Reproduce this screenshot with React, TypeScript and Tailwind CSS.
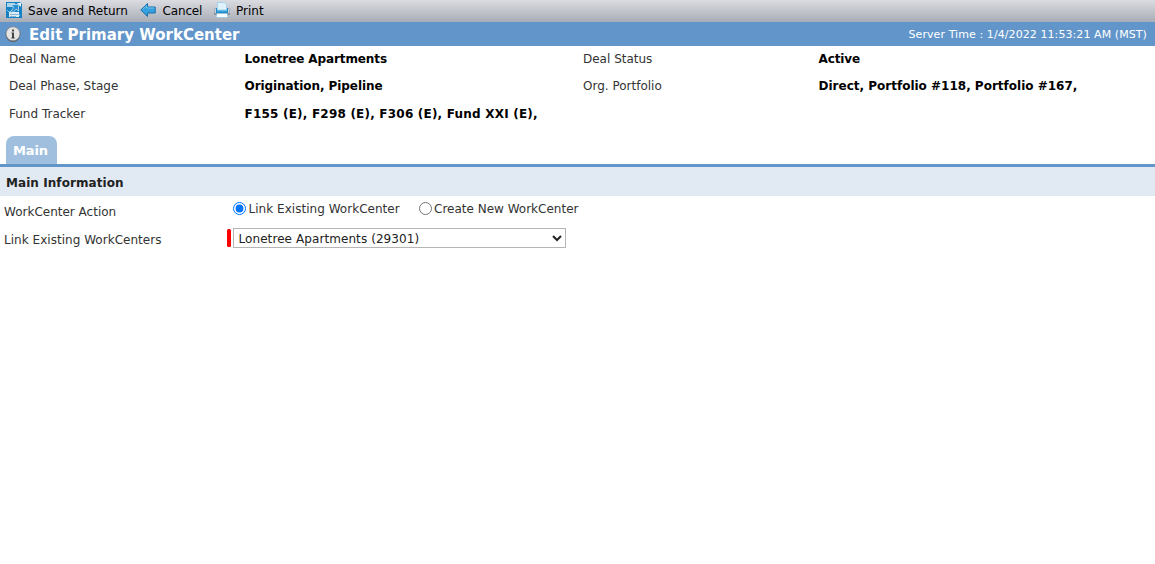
import { useState } from 'react'

type Field = { label: string; value: string; valueClass: string; rowClass: string }

const leftFields: Field[] = [
  { label: 'Deal Name', value: 'Lonetree Apartments', valueClass: 'tracking-[-0.1px]', rowClass: 'h-[27px]' },
  { label: 'Deal Phase, Stage', value: 'Origination, Pipeline', valueClass: 'tracking-[-0.07px]', rowClass: 'h-[28px]' },
  { label: 'Fund Tracker', value: 'F155 (E), F298 (E), F306 (E), Fund XXI (E),', valueClass: 'tracking-[0.21px]', rowClass: 'h-[28px]' },
]

const rightFields: Field[] = [
  { label: 'Deal Status', value: 'Active', valueClass: 'tracking-[-0.1px]', rowClass: 'h-[27px]' },
  { label: 'Org. Portfolio', value: 'Direct, Portfolio #118, Portfolio #167,', valueClass: 'tracking-normal', rowClass: 'h-[28px]' },
]

function SaveIcon() {
  return (
    <svg width="16" height="16" viewBox="0 0 16 16">
      <path d="M0 0h14l2 2v14H0z" fill="#1681c2" />
      <path d="M1 1h8v4H1z" fill="#a9d4ea" />
      <path d="M11 1h4v4z" fill="#edf6fa" />
      <path d="M3 10h10v5H3z" fill="#dcebf4" />
      <path d="M4 12.5h8M4 14.5h6" stroke="#86b4d2" />
      <path d="M5 2.5h7.5V9L10 7c-1 2.5-3.5 4-6.5 3C5.500 9 6.500 7.500 7.500 5z" fill="#2c8fd0" stroke="#d5edf8" strokeWidth=".7" />
      <path d="M1 8l2 2M12.500 12l1.500 2" stroke="#83c9ea" />
    </svg>
  )
}

function BackIcon() {
  return (
    <svg width="16" height="16" viewBox="0 0 16 16">
      <path d="M.8 8L7.5 1.5V5h7.7v6H7.5v3.5z" fill="#35a0df" stroke="#176eaa" strokeLinejoin="round" />
      <path d="M2.5 7.6L6.6 3.7V6h7.6" fill="none" stroke="#71c4f0" />
    </svg>
  )
}

function PrintIcon() {
  return (
    <svg width="16" height="16" viewBox="0 0 16 16">
      <path d="M0 7l1-1h14l1 1v6H0z" fill="#a1adb8" />
      <path d="M1 7h14v4H1z" fill="#c6d2dc" />
      <path d="M3.5.5h7l2 2V8h-9z" fill="#dff1fc" stroke="#a5d3ee" />
      <path d="M2 6h1v2h10V6h1v5H2z" fill="#1c8bc9" />
      <path d="M3 8h10v1.500H3z" fill="#5db9e6" />
      <path d="M0 11h16v2H0z" fill="#8695a4" />
      <path d="M3 11.500h10l1 4H2z" fill="#f8fcff" stroke="#91c1df" strokeWidth=".7" />
    </svg>
  )
}

function InfoIcon() {
  return (
    <svg width="16" height="16" viewBox="0 0 16 16">
      <circle cx="8" cy="8.5" r="7.4" fill="#555d66" />
      <circle cx="8" cy="7.8" r="7" fill="#e4e4e4" stroke="#777" strokeWidth=".6" />
      <path d="M7 3.5h2v2H7zM6.5 6.5H9v5h.8v1H6.2v-1H7v-4h-.5z" fill="#444" />
    </svg>
  )
}

function FieldColumn({ fields }: { fields: Field[] }) {
  return (
    <div className="w-[574px] shrink-0">
      {fields.map((field) => (
        <div key={field.label} className={`flex items-start ${field.rowClass}`}>
          <span className="w-[235.5px] shrink-0 text-[#333]">{field.label}</span>
          <span className={`font-bold text-black ${field.valueClass}`}>{field.value}</span>
        </div>
      ))}
    </div>
  )
}

export default function App() {
  const [action, setAction] = useState('link')

  return (
    <div className="h-[564px] overflow-hidden bg-white font-['DejaVu_Sans',sans-serif] text-[12px] leading-[16px] whitespace-nowrap text-[#333]">
      <div className="flex h-[22px] items-start bg-linear-to-b from-[#dadce1] to-[#a9adb6] pt-[2px] pl-[6px] text-black">
        <button className="flex w-[134px] gap-[6px]">
          <SaveIcon />
          <span className="pt-px tracking-[0.03px]">Save and Return</span>
        </button>
        <button className="flex w-[74px] gap-[6.5px]">
          <BackIcon />
          <span className="pt-px tracking-[-0.15px]">Cancel</span>
        </button>
        <button className="flex gap-[6px]">
          <PrintIcon />
          <span className="pt-px">Print</span>
        </button>
      </div>
      <header className="flex h-6 items-center bg-[#6296ca] pr-2 pl-[5px] text-white">
        <InfoIcon />
        <h1 className="ml-2 pt-px text-[15px] font-bold">Edit Primary WorkCenter</h1>
        <span className="ml-auto pt-px text-[11px] tracking-[0.08px]">Server Time : 1/4/2022 11:53:21 AM (MST)</span>
      </header>
      <section className="flex h-[90px] pt-[5px] pl-[9px]">
        <FieldColumn fields={leftFields} />
        <FieldColumn fields={rightFields} />
      </section>
      <nav className="flex h-[31px] border-b-[3px] border-[#6296ca] pl-[6px]">
        <button className="h-7 w-[51px] rounded-t-lg bg-[#a0bfde] pt-[2px] pr-[2px] text-[13px] font-bold tracking-[-0.1px] text-white">Main</button>
      </nav>
      <h2 className="flex h-[29px] items-center bg-[#e1e9f3] pt-[3px] pl-[6px] font-bold tracking-[0.07px] text-[#222]">Main Information</h2>
      <form>
        <div className="flex h-[30px] pl-1">
          <span className="w-[229px] pt-[8px]">WorkCenter Action</span>
          <label className="flex h-[25px] w-[186px] items-center">
            <input type="radio" name="action" className="mr-[2.5px] h-[13px] w-[13px]" checked={action === 'link'} onChange={() => setAction('link')} />
            <span className="tracking-[0.03px]">Link Existing WorkCenter</span>
          </label>
          <label className="flex h-[25px] items-center">
            <input type="radio" name="action" className="mr-[2px] h-[13px] w-[13px]" checked={action === 'new'} onChange={() => setAction('new')} />
            Create New WorkCenter
          </label>
        </div>
        <div className="flex pl-1">
          <span className="w-[223px] pt-[6px] tracking-[0.03px]">Link Existing WorkCenters</span>
          <span className="mt-[3px] mr-[2px] h-[18px] w-1 rounded-[1.5px] bg-[#f00]" />
          <select className="mt-[2px] h-5 w-[333px] border border-[#b5b5b5] bg-white pt-px pl-[0.5px] text-[12px] tracking-[0.08px] text-[#222]">
            <option>Lonetree Apartments (29301)</option>
          </select>
        </div>
      </form>
    </div>
  )
}
